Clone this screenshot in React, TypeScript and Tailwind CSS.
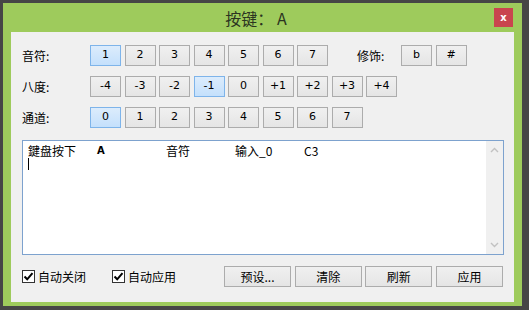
import React from "react";

const CJK = "font-['Microsoft_YaHei','Noto_Sans_CJK_SC',sans-serif]";
const LAT = "font-['DejaVu_Sans','Noto_Sans_CJK_SC',sans-serif]";

function Btn({ label, sel, w = "w-[31px]" }: { label: string; sel?: boolean; w?: string }) {
  return (
    <div
      className={`${w} h-[21px] flex items-center justify-center border text-[11px] text-black ${LAT} ${
        sel
          ? "border-[#7eb4ea] bg-gradient-to-b from-[#dcecfc] to-[#c4e0fc]"
          : "border-[#acacac] bg-gradient-to-b from-[#f0f0f0] to-[#e5e5e5]"
      }`}
    >
      {label}
    </div>
  );
}

function Row({ label, items, sel, children }: { label: string; items: string[]; sel: string; children?: React.ReactNode }) {
  return (
    <div className="flex items-center h-[21px]">
      <div className={`w-[68px] text-[12px] text-black ${CJK}`}>{label}</div>
      <div className="flex gap-[3.5px]">
        {items.map((it) => (
          <Btn key={it} label={it} sel={it === sel} />
        ))}
      </div>
      {children}
    </div>
  );
}

function Check({ label }: { label: string }) {
  return (
    <div className="flex items-center gap-[3px]">
      <div className="w-[13px] h-[13px] border border-[#333] bg-white flex items-center justify-center">
        <svg width="11" height="11" viewBox="0 0 11 11">
          <path d="M1.5 5.5 L4.2 8.3 L9.5 2.2" stroke="#000" strokeWidth="2" fill="none" />
        </svg>
      </div>
      <span className={`text-[12px] text-black ${CJK}`}>{label}</span>
    </div>
  );
}

export default function App() {
  const cols = ["鍵盘按下", "A", "音符", "输入_0", "C3"];
  return (
    <div className="w-[529px] h-[310px] bg-[#464646] pt-[3px] pl-[3px]">
      <div className="w-[519px] h-[303px] bg-[#9ecb5c] flex flex-col">
        <div className="h-[29px] flex items-center">
          <div className="flex-1" />
          <div className={`text-[16px] text-[#2b3421] ml-[-4px] ${CJK}`}>按键： A</div>
          <div className="flex-1 flex justify-end pr-[9px]">
            <div className="w-[19px] h-[19px] bg-[#c9454e] flex items-center justify-center">
              <span className="text-white text-[10px] font-bold leading-none font-['DejaVu_Sans',sans-serif]">x</span>
            </div>
          </div>
        </div>
        <div className="mx-[8px] mb-[4px] flex-1 bg-[#f0f0f0] pl-[11px] pr-[10px] pt-[13px] flex flex-col">
          <div className="flex flex-col gap-[10px]">
            <Row label="音符:" items={["1", "2", "3", "4", "5", "6", "7"]} sel="1">
              <div className={`ml-[29px] w-[44px] text-[12px] text-black ${CJK}`}>修饰:</div>
              <div className="flex gap-[3.5px]">
                <Btn label="b" />
                <Btn label="#" />
              </div>
            </Row>
            <Row label="八度:" items={["-4", "-3", "-2", "-1", "0", "+1", "+2", "+3", "+4"]} sel="-1" />
            <Row label="通道:" items={["0", "1", "2", "3", "4", "5", "6", "7"]} sel="0" />
          </div>
          <div className="mt-[12px] w-[482px] h-[115px] border border-[#7da2ce] bg-white flex">
            <div className="flex-1 pl-[5px] pt-[2px]">
              <div className="flex h-[15px] items-center">
                {cols.map((c, i) => (
                  <div
                    key={i}
                    className={`w-[69px] text-black ${
                      c === "A" ? "text-[10px] font-bold font-['DejaVu_Sans',sans-serif]" : `text-[12px] ${CJK}`
                    }`}
                  >
                    {c}
                  </div>
                ))}
              </div>
              <div className="w-[1px] h-[12px] bg-black mt-[0px]" />
            </div>
            <div className="w-[17px] bg-[#f0f0f0] flex flex-col justify-between items-center py-[6px]">
              <svg width="9" height="6" viewBox="0 0 9 6">
                <path d="M1 5 L4.5 1.5 L8 5" stroke="#c2c2c2" strokeWidth="1.4" fill="none" />
              </svg>
              <svg width="9" height="6" viewBox="0 0 9 6">
                <path d="M1 1 L4.5 4.5 L8 1" stroke="#c2c2c2" strokeWidth="1.4" fill="none" />
              </svg>
            </div>
          </div>
          <div className="mt-[11px] flex items-center">
            <div className="w-[90px]">
              <Check label="自动关闭" />
            </div>
            <div className="w-[112px]">
              <Check label="自动应用" />
            </div>
            <div className="flex gap-[3.7px]">
              {["预设...", "清除", "刷新", "应用"].map((t) => (
                <div
                  key={t}
                  className={`w-[67px] h-[21px] flex items-center justify-center border border-[#acacac] bg-gradient-to-b from-[#f0f0f0] to-[#e5e5e5] text-[12px] text-black ${CJK}`}
                >
                  {t}
                </div>
              ))}
            </div>
          </div>
        </div>
      </div>
    </div>
  );
}
